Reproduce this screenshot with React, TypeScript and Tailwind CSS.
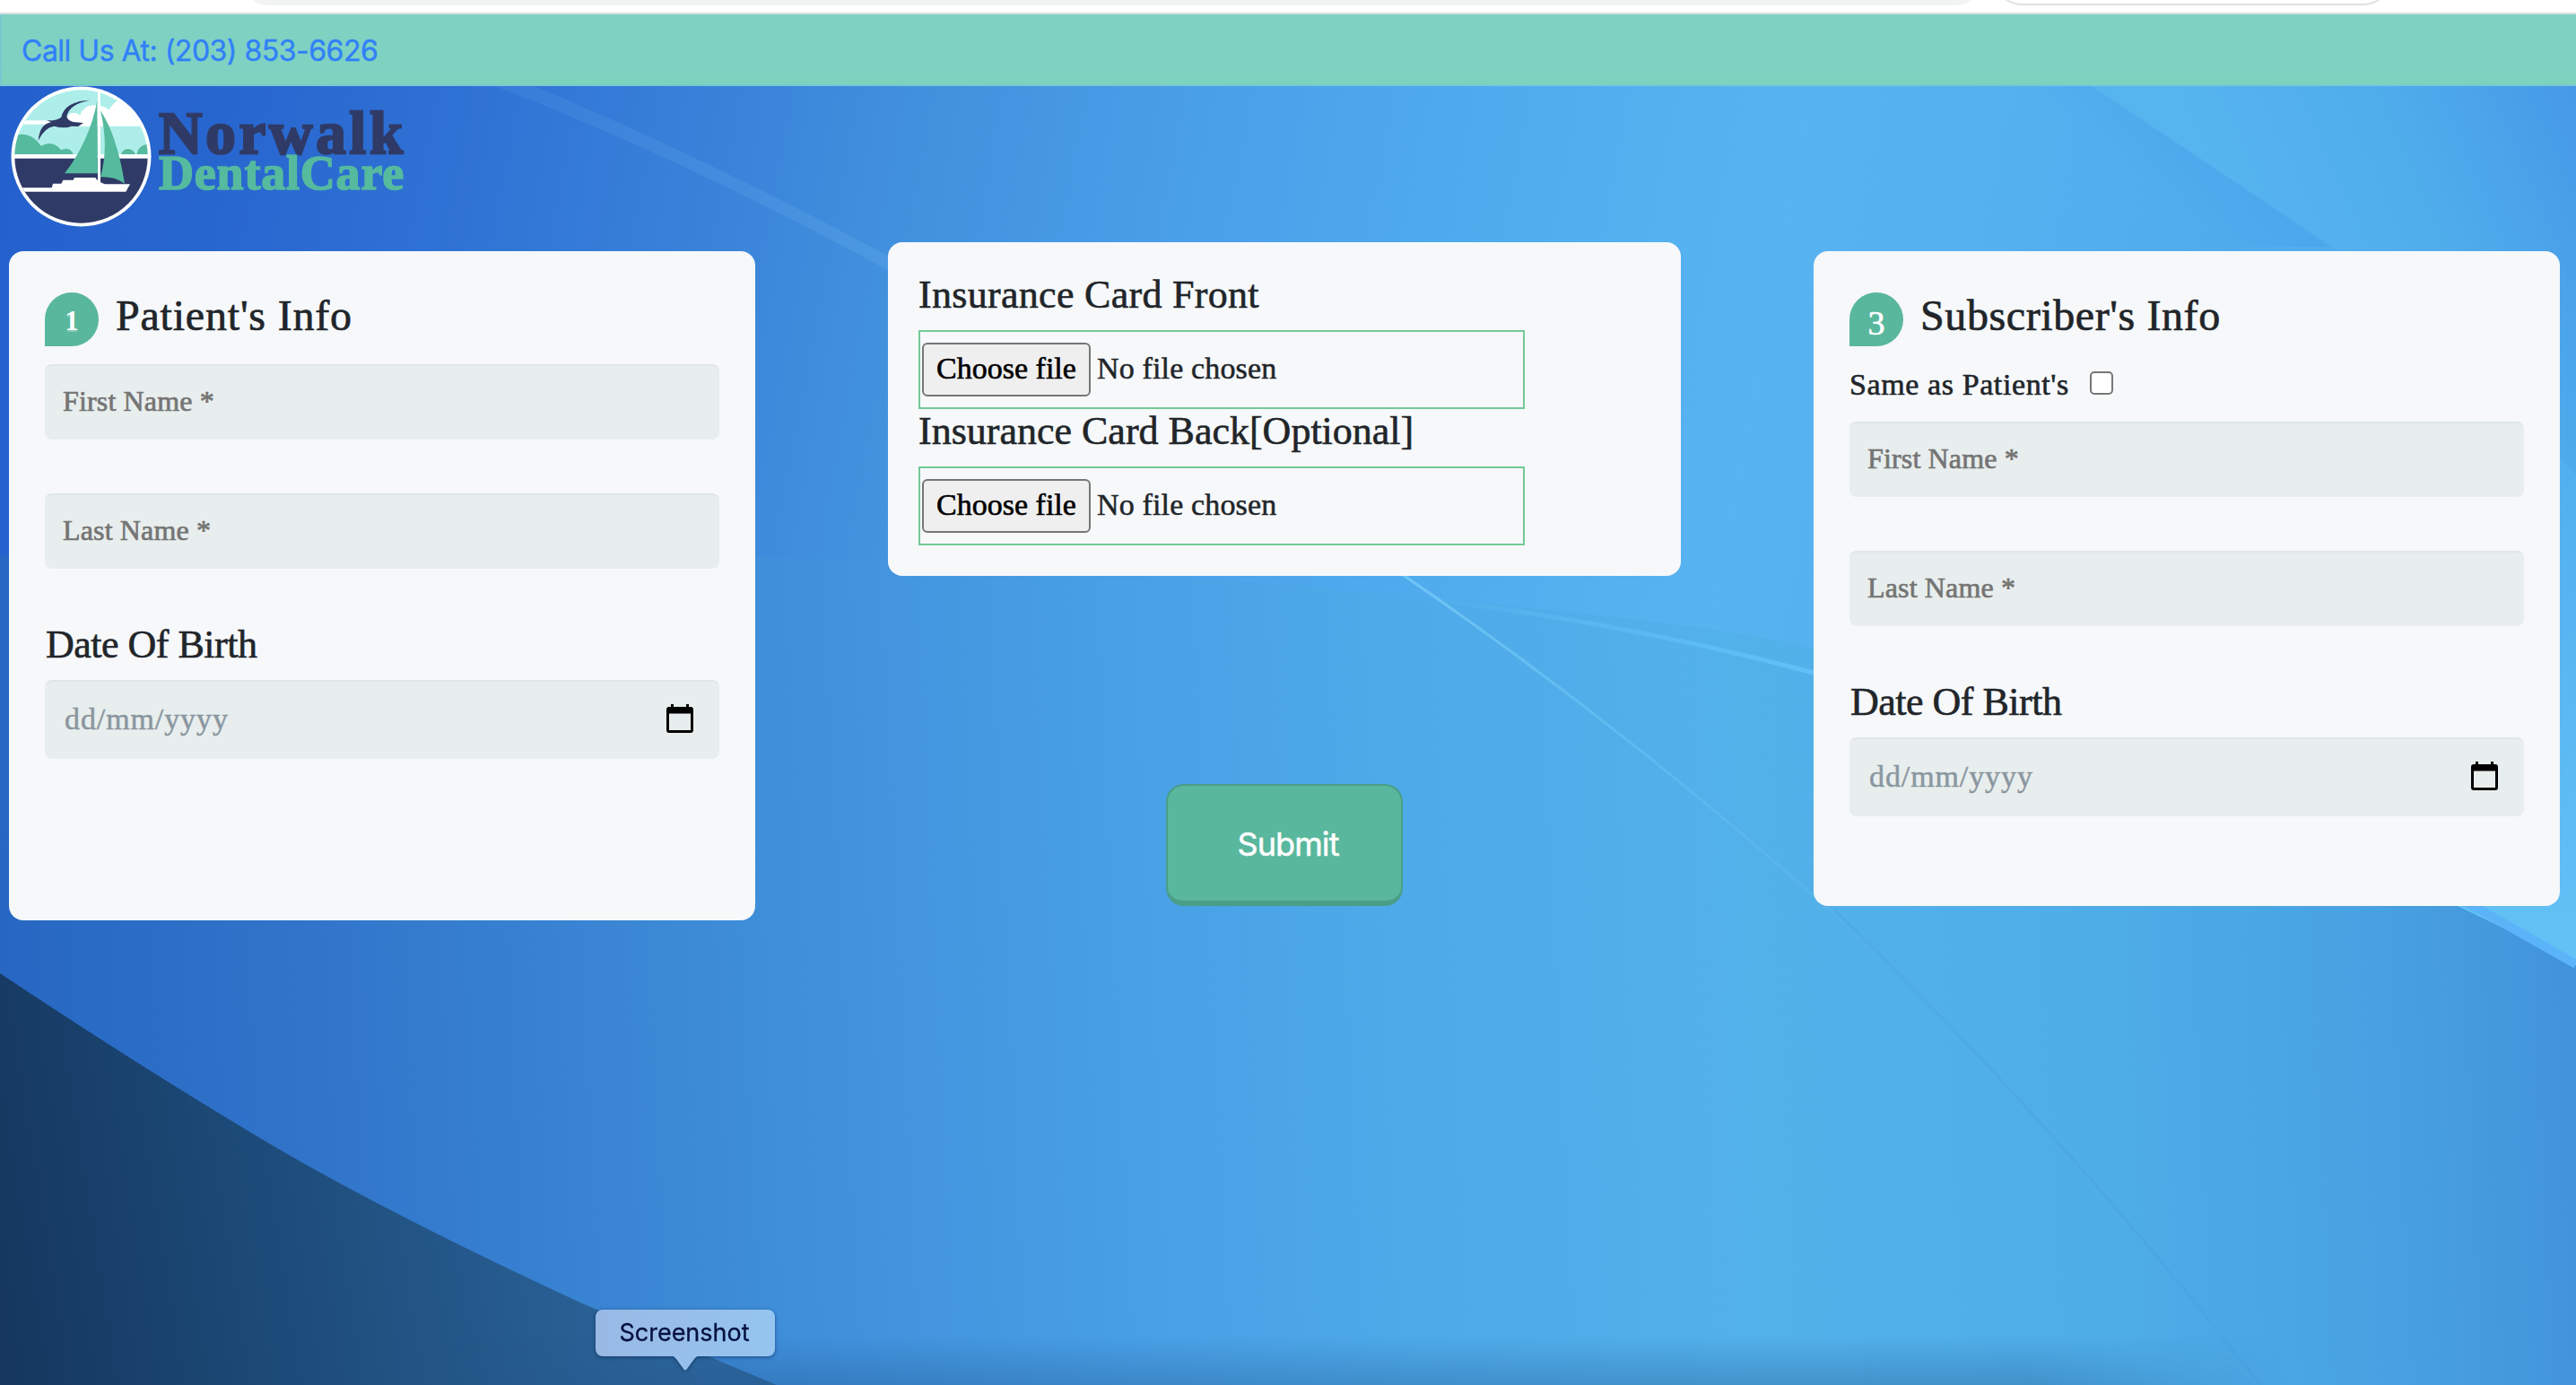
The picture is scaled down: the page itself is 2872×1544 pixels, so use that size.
import React from "react";

const serif = "font-['Liberation_Serif',Georgia,serif]";

function Backdrop() {
  return (
    <svg
      className="absolute inset-0 -z-10 h-full w-full"
      viewBox="0 96 2872 1448"
      preserveAspectRatio="none"
      aria-hidden="true"
    >
      <defs>
        <linearGradient id="sky" gradientUnits="userSpaceOnUse" x1="-40" y1="100" x2="2800" y2="640">
          <stop offset="0" stopColor="#2460cd" />
          <stop offset="0.1" stopColor="#2866cf" />
          <stop offset="0.18" stopColor="#2e70d4" />
          <stop offset="0.3" stopColor="#3a84da" />
          <stop offset="0.36" stopColor="#4190dd" />
          <stop offset="0.47" stopColor="#4a9fe9" />
          <stop offset="0.58" stopColor="#50abee" />
          <stop offset="0.7" stopColor="#58b4f0" />
          <stop offset="0.82" stopColor="#52aeee" />
          <stop offset="1" stopColor="#4ba5ec" />
        </linearGradient>
        <linearGradient id="low" gradientUnits="userSpaceOnUse" x1="0" y1="1000" x2="2872" y2="860">
          <stop offset="0" stopColor="#2767c3" />
          <stop offset="0.12" stopColor="#3175ca" />
          <stop offset="0.3" stopColor="#3f8fda" />
          <stop offset="0.43" stopColor="#489fe5" />
          <stop offset="0.54" stopColor="#4eaae9" />
          <stop offset="0.68" stopColor="#53b1ea" />
          <stop offset="0.82" stopColor="#4eace7" />
          <stop offset="0.92" stopColor="#48a1e2" />
          <stop offset="1" stopColor="#4192d9" />
        </linearGradient>
        <linearGradient id="corner" gradientUnits="userSpaceOnUse" x1="0" y1="1450" x2="760" y2="1330">
          <stop offset="0" stopColor="#15375f" />
          <stop offset="0.4" stopColor="#1d4b79" />
          <stop offset="1" stopColor="#2d689f" />
        </linearGradient>
        <linearGradient id="wedge" gradientUnits="userSpaceOnUse" x1="2500" y1="260" x2="2872" y2="96">
          <stop offset="0" stopColor="#56b4ef" />
          <stop offset="0.5" stopColor="#50adec" />
          <stop offset="1" stopColor="#4699e7" />
        </linearGradient>
        <linearGradient id="facet" gradientUnits="userSpaceOnUse" x1="2430" y1="230" x2="2520" y2="120">
          <stop offset="0" stopColor="#4399e6" stopOpacity="0" />
          <stop offset="1" stopColor="#4399e6" stopOpacity="0.45" />
        </linearGradient>
        <linearGradient id="streak" gradientUnits="userSpaceOnUse" x1="560" y1="96" x2="1000" y2="300">
          <stop offset="0" stopColor="#6db4f0" stopOpacity="0.12" />
          <stop offset="1" stopColor="#6db4f0" stopOpacity="0.25" />
        </linearGradient>
        <linearGradient id="ray" gradientUnits="userSpaceOnUse" x1="1565" y1="642" x2="2100" y2="1070">
          <stop offset="0" stopColor="#78ccf8" stopOpacity="0.8" />
          <stop offset="1" stopColor="#66c0f4" stopOpacity="0.1" />
        </linearGradient>
        <linearGradient id="rim" gradientUnits="userSpaceOnUse" x1="1600" y1="0" x2="2022" y2="0">
          <stop offset="0" stopColor="#62c0f8" stopOpacity="0.1" />
          <stop offset="1" stopColor="#62c0f8" />
        </linearGradient>
        <linearGradient id="shade" x1="0" y1="0" x2="0" y2="1">
          <stop offset="0" stopColor="#1f4f86" stopOpacity="0" />
          <stop offset="1" stopColor="#1f4f86" stopOpacity="0.3" />
        </linearGradient>
        <linearGradient id="edge" x1="0" y1="0" x2="1" y2="0">
          <stop offset="0" stopColor="#fff" stopOpacity="0" />
          <stop offset="0.14" stopColor="#fff" stopOpacity="1" />
          <stop offset="0.86" stopColor="#fff" stopOpacity="1" />
          <stop offset="1" stopColor="#fff" stopOpacity="0" />
        </linearGradient>
        <linearGradient id="right" gradientUnits="userSpaceOnUse" x1="0" y1="450" x2="0" y2="1080">
          <stop offset="0" stopColor="#50adee" />
          <stop offset="1" stopColor="#64c2f6" />
        </linearGradient>
        <mask id="fade">
          <rect x="500" y="1470" width="2050" height="74" fill="url(#edge)" />
        </mask>
      </defs>
      <rect x="0" y="96" width="2872" height="1448" fill="url(#sky)" />
      <path d="M2160 96 H2340 L2610 285 H2440Z" fill="url(#facet)" />
      <path d="M2332 96 L2600 275 Q2760 400 2872 530 V96 Z" fill="url(#wedge)" />
      <path d="M2600 275 Q2760 400 2872 530 V1100 H2500 V275Z" fill="url(#right)" />
      <path d="M552 96 H596 Q800 182 1010 296 V312 Q770 180 552 96Z" fill="url(#streak)" />
      <path d="M0 620 Q842 600 1500 658 T2022 748 Q2500 880 2872 1076 V1544 H0Z" fill="url(#low)" />
      <path d="M1600 669 Q1820 696 2022 750" fill="none" stroke="url(#rim)" strokeWidth="5" />
      <path d="M2740 1000 L2872 1075" stroke="#5bb3f8" strokeWidth="10" />
      <path d="M1560 638 Q1790 795 2010 988 Q2060 1030 2165 1132" fill="none" stroke="url(#ray)" strokeWidth="3" />
      <path d="M2045 1015 Q2300 1260 2520 1544" fill="none" stroke="#3f9bdd" strokeOpacity="0.2" strokeWidth="3" />
      <path d="M0 1085 Q150 1185 287 1267 T649 1453 L866 1544 H0Z" fill="url(#corner)" />
      <rect x="500" y="1490" width="2050" height="54" fill="url(#shade)" mask="url(#fade)" />
    </svg>
  );
}

function LogoMark() {
  return (
    <svg className="h-[157px] w-[157px] shrink-0" viewBox="37 286 471 471" aria-hidden="true">
      <defs>
        <clipPath id="disc">
          <circle cx="272.500" cy="521.500" r="222.500" />
        </clipPath>
      </defs>
      <circle cx="272.500" cy="521.500" r="234" fill="#fff" />
      <g clipPath="url(#disc)">
        <rect x="40" y="280" width="470" height="240" fill="#aeeeea" />
        <path d="M222 404 Q224 374 250 375 Q262 376 268 384 Q280 352 312 350 Q350 350 366 366 Q376 346 392 336 L440 300 L520 420 H222Z" fill="#fff" />
        <rect x="60" y="401" width="190" height="13" fill="#fff" />
        <rect x="220" y="398" width="300" height="15" fill="#fff" />
        <path d="M40 455 Q100 430 138 486 Q176 464 206 500 Q234 486 246 514 H40Z" fill="#56ba9e" />
        <path d="M406 514 Q412 496 430 496 Q446 496 454 514 Z M458 514 Q464 480 500 480 V514Z" fill="#56ba9e" />
        <rect x="40" y="514" width="470" height="14" fill="#fff" />
        <rect x="40" y="528" width="470" height="240" fill="#2f3a66" />
        <rect x="328" y="290" width="9" height="320" fill="#fff" />
        <path d="M326 336 L328 578 H217 Q300 470 326 336Z" fill="#56ba9e" />
        <path d="M337 368 Q392 450 418 612 Q385 588 337 590 Q366 490 337 368Z" fill="#56ba9e" />
        <path d="M60 626 H174 L178 612 H206 L212 600 H246 L250 592 H320 L326 600 L342 610 L352 614 H436 L422 639 H60Z" fill="#fff" />
        <path d="M302 333 Q218 336 206 390 Q192 402 158 401 L172 407 Q134 412 129 468 Q150 424 182 420 Q218 430 240 420 L262 421 L280 409 L246 406 Q228 402 224 388 Q232 346 302 333Z" fill="#2f3a66" />
      </g>
    </svg>
  );
}

function CalendarIcon() {
  return (
    <svg className="mb-1 h-8 w-[30px] shrink-0" viewBox="0 0 30 32" aria-hidden="true">
      <path
        fillRule="evenodd"
        d="M5 0h3v3h14V0h3v3h2a3 3 0 0 1 3 3v23a3 3 0 0 1-3 3H3a3 3 0 0 1-3-3V6a3 3 0 0 1 3-3h2V0ZM3 10.500v18.500h24V10.500H3Z"
        fill="#000"
      />
    </svg>
  );
}

function Badge({ children, className }: { children: string; className: string }) {
  return (
    <div className="flex size-15 shrink-0 items-center justify-center rounded-full rounded-bl-none bg-[#59b79d] text-white">
      <span className={className}>{children}</span>
    </div>
  );
}

function Field({ placeholder }: { placeholder: string }) {
  return (
    <div className="flex h-[84px] items-center rounded-lg border-t-2 border-[#dfe7e6] bg-[#e8eeed] px-5 pb-1 text-[32px] tracking-[0.15px] text-[#757575] [-webkit-text-stroke:0.7px]">
      {placeholder}
    </div>
  );
}

function BirthDate() {
  return (
    <>
      <h3 className="mt-15 mb-3.5 h-[50px] pl-px text-[44px] leading-[50px] tracking-[-0.5px] [-webkit-text-stroke:0.6px]">Date Of Birth</h3>
      <div className="flex h-[88px] items-center justify-between rounded-lg border-t-2 border-[#dfe7e6] bg-[#e8eeed] pr-[29px] pl-[22px] text-[34px] text-[#8a969f]">
        <span className="pb-1 tracking-[0.9px] [-webkit-text-stroke:0.5px]">dd/mm/yyyy</span>
        <CalendarIcon />
      </div>
    </>
  );
}

function FilePicker() {
  return (
    <div className="flex h-[88px] w-[676px] items-center border-2 border-[#73c996] px-0.5 text-[34px]">
      <button className="h-[60px] w-[188px] rounded-md border-2 border-[#767676] bg-[#efefef] pb-[3px] text-black [-webkit-text-stroke:0.6px]">
        Choose file
      </button>
      <span className="ml-[7px] pb-[3px] tracking-[0.15px] [-webkit-text-stroke:0.5px]">No file chosen</span>
    </div>
  );
}

export default function App() {
  return (
    <div className="flex h-[1544px] w-[2872px] flex-col overflow-hidden bg-white font-[Inter,sans-serif]">
      <div className="flex h-4 shrink-0 items-end overflow-hidden border-b-2 border-[#dddde3] bg-white pb-2 pl-[267px]">
        <div className="h-[68px] w-[1946px] rounded-full bg-[#f1f3f4]" />
        <div className="ml-[8px] h-[68px] w-[447px] rounded-full border-2 border-[#dfe1e3]" />
      </div>

      <div className="relative isolate flex grow flex-col">
        <div className="flex h-20 items-center border-b-2 border-l-2 border-[#78c8d3] bg-linear-to-b from-[#7fd1c2] from-75% to-[#7dd3bc] pl-[22px] text-[32px] text-[#3080f8]">
          <a className="pt-[3px] tracking-[-0.5px] [-webkit-text-stroke:0.4px]">Call Us At: (203) 853-6626</a>
        </div>

        <div className="relative flex grow flex-col">
          <Backdrop />
          <header className="flex h-[174px] shrink-0 items-start pl-3">
            <LogoMark />
            <div className={`ml-2 flex flex-col pt-8 font-bold ${serif}`}>
              <span className="text-[67px] leading-10 tracking-[3.8px] text-[#2f3a66] [-webkit-text-stroke:2.6px]">Norwalk</span>
              <span className="mt-[5px] text-[54px] leading-10 tracking-[0.8px] text-[#56ba9e] [-webkit-text-stroke:1.6px]">DentalCare</span>
            </div>
          </header>

          <main className={`flex items-start gap-[148px] pl-2.5 text-[#212529] ${serif}`}>
            <section className="mt-2.5 h-[746px] w-[832px] shrink-0 rounded-2xl bg-[#f6f8fa] px-10 pt-[46px]">
              <div className="flex h-15 items-center gap-5">
                <Badge className="pt-1 text-[31px] font-bold [text-shadow:0_2px_0_rgba(255,255,255,0.3)]">1</Badge>
                <h2 className="-ml-px pb-2 text-[48px] leading-none tracking-[0.8px] [-webkit-text-stroke:0.7px]">Patient's Info</h2>
              </div>
              <div className="mt-5 flex flex-col gap-15">
                <Field placeholder="First Name *" />
                <Field placeholder="Last Name *" />
              </div>
              <BirthDate />
            </section>

            <div className="flex w-[884px] shrink-0 flex-col items-center">
              <section className="h-[372px] w-full rounded-2xl bg-[#f6f8fa] px-[34px] pt-[34px]">
                <h3 className="mb-3.5 h-[50px] text-[44px] leading-[50px] tracking-[0.3px] [-webkit-text-stroke:0.6px]">Insurance Card Front</h3>
                <FilePicker />
                <h3 className="mt-0.5 mb-4 h-[46px] text-[44px] leading-[46px] [-webkit-text-stroke:0.6px]">Insurance Card Back[Optional]</h3>
                <FilePicker />
              </section>
              <button className="mt-[232px] h-[136px] w-[264px] rounded-[20px] border-2 border-b-[6px] border-[#4a9d87] bg-[#59b79d] pt-0.5 pl-2 font-[Inter,sans-serif] text-[36px] tracking-[-0.9px] text-white [-webkit-text-stroke:0.5px]">
                Submit
              </button>
            </div>

            <section className="mt-2.5 h-[730px] w-[832px] shrink-0 rounded-2xl bg-[#f6f8fa] px-10 pt-[46px]">
              <div className="flex h-15 items-center gap-5">
                <Badge className="pt-2 text-[38px] [-webkit-text-stroke:0.6px]">3</Badge>
                <h2 className="-ml-px pb-2 text-[48px] leading-none tracking-[0.6px] [-webkit-text-stroke:0.7px]">Subscriber's Info</h2>
              </div>
              <div className="flex h-[84px] items-center text-[34px]">
                <span className="tracking-[0.6px] [-webkit-text-stroke:0.6px]">Same as Patient's</span>
                <span className="mb-0.5 ml-[23px] size-[26px] rounded-[5px] border-2 border-[#767676] bg-white" />
              </div>
              <div className="flex flex-col gap-15">
                <Field placeholder="First Name *" />
                <Field placeholder="Last Name *" />
              </div>
              <BirthDate />
            </section>
          </main>

          <div className="absolute top-[1364px] left-[664px] flex flex-col items-center drop-shadow-[0_1px_2px_rgba(0,20,60,0.5)]">
            <div className="flex h-[52px] w-[200px] items-center justify-center rounded-lg bg-linear-to-r from-[#99b9e5] to-[#95c5f0] pr-0.5 text-[27px] text-[#06113f] [-webkit-text-stroke:0.3px]">
              Screenshot
            </div>
            <svg className="-mt-px h-[17px] w-8" viewBox="0 0 32 17" aria-hidden="true">
              <path d="M0 0 Q4 1 6 4 L14 15 Q16 18 18 15 L26 4 Q28 1 32 0Z" fill="#97bfeb" />
            </svg>
          </div>
        </div>
      </div>
    </div>
  );
}
